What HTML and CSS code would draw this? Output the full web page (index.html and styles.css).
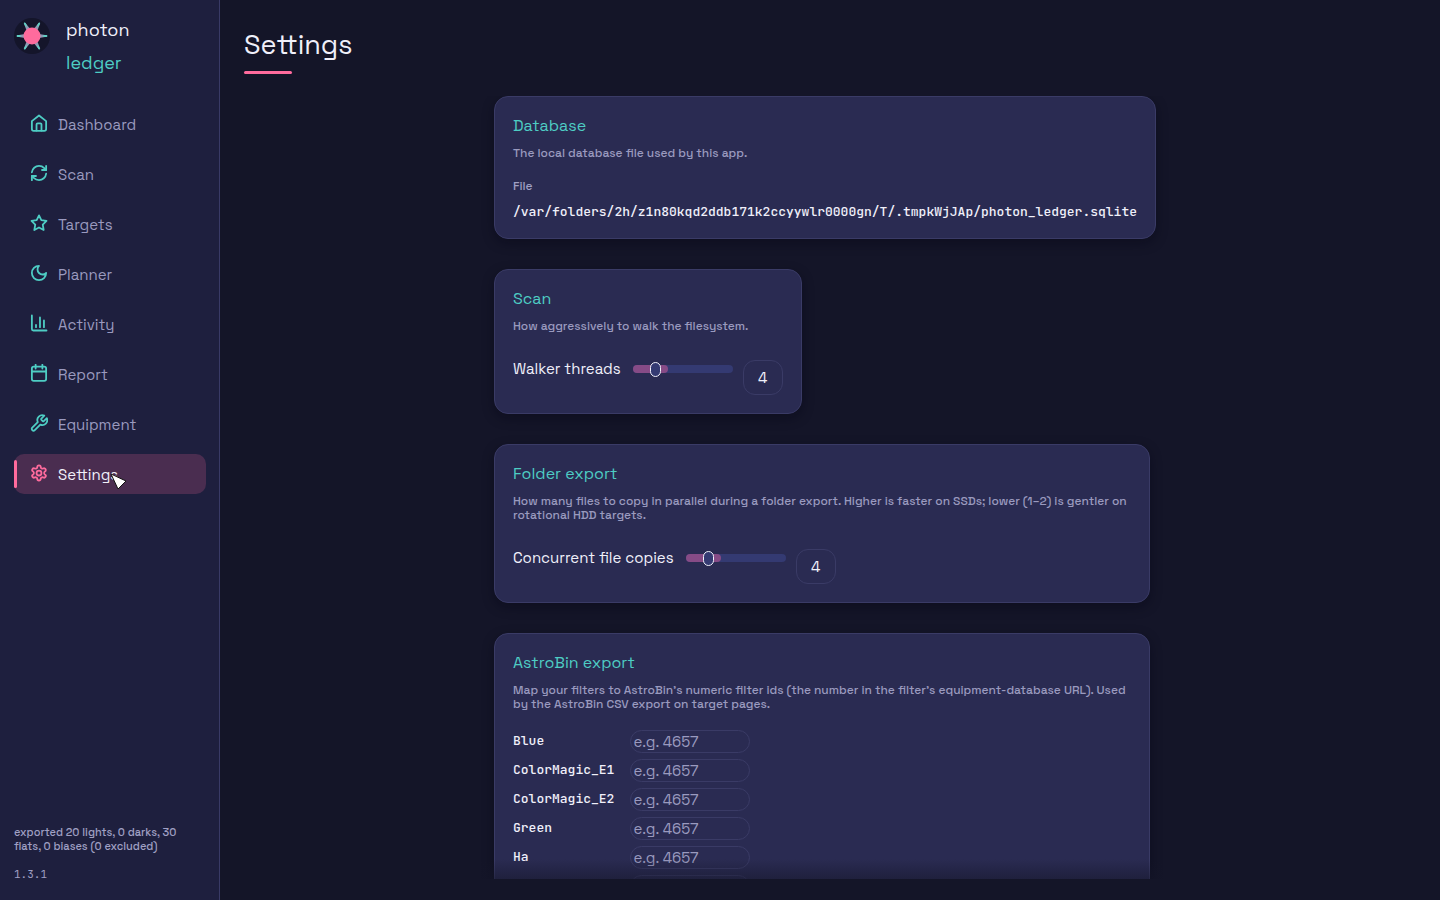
FILE: index.html
```
<!DOCTYPE html>
<html lang="en">
<head>
  <meta charset="UTF-8" />
  <meta name="viewport" content="width=device-width, initial-scale=1.0" />
  <title>Photon Ledger - Settings</title>
  <link rel="stylesheet" href="styles.css">
</head>
<body>
  <div class="app">
    <aside class="sidebar">
      <div class="brand">
        <svg class="brand-logo" viewBox="0 0 36 36" aria-hidden="true">
          <circle cx="18" cy="18" r="18" fill="#14152a" />
          <g fill="#8f9bb3">
            <path d="M17.200 3.500 H18.800 L20 11 H16 Z" transform="rotate(30 18 18)" />
            <path d="M17.200 3.500 H18.800 L20 11 H16 Z" transform="rotate(90 18 18)" />
            <path d="M17.200 3.500 H18.800 L20 11 H16 Z" transform="rotate(150 18 18)" />
            <path d="M17.200 3.500 H18.800 L20 11 H16 Z" transform="rotate(210 18 18)" />
            <path d="M17.200 3.500 H18.800 L20 11 H16 Z" transform="rotate(270 18 18)" />
            <path d="M17.200 3.500 H18.800 L20 11 H16 Z" transform="rotate(330 18 18)" />
          </g>
          <path d="M3.500 18 H6 M32.500 18 H30 M10.750 5.400 L12 7.600 M25.250 5.400 L24 7.600 M10.750 30.600 L12 28.400 M25.250 30.600 L24 28.400" stroke="#5fcfc4" stroke-width="1.800" stroke-linecap="round" />
          <circle cx="18" cy="18" r="8.500" fill="#ff6b9d" />
        </svg>
        <div class="brand-text">
          <span>photon</span>
          <span class="brand-accent">ledger</span>
        </div>
      </div>

      <nav class="nav">
        <a href="#" class="nav-item">
          <svg class="icon" viewBox="0 0 24 24"><path d="M12 2 L21.500 9.500 V20 a2.500 2.500 0 0 1 -2.500 2.500 H5 A2.500 2.500 0 0 1 2.500 20 V9.500 Z" /><path d="M8.700 22 V14 a1.500 1.500 0 0 1 1.500 -1.500 H13.800 a1.500 1.500 0 0 1 1.500 1.500 V22" /></svg>
          <span>Dashboard</span>
        </a>
        <a href="#" class="nav-item">
          <svg class="icon" viewBox="0 0 24 24"><path d="M2.500 11 A9.600 9.600 0 0 1 12 2.500 a10 10 0 0 1 7 2.900 L21.500 8" /><path d="M21.500 2.500 V8 H16" /><path d="M21.500 13 A9.600 9.600 0 0 1 12 21.500 a10 10 0 0 1 -7 -2.900 L2.500 16" /><path d="M8 16 H2.500 V21.500" /></svg>
          <span>Scan</span>
        </a>
        <a href="#" class="nav-item">
          <svg class="icon" viewBox="0 0 24 24"><path d="M12 1.800 L15.100 8.200 L22 9.200 L17 14.200 L18.200 21.300 L12 18 L5.800 21.300 L7 14.200 L2 9.200 L8.900 8.200 Z" /></svg>
          <span>Targets</span>
        </a>
        <a href="#" class="nav-item">
          <svg class="icon" viewBox="0 0 24 24"><path d="M12 2.500 a6.300 6.300 0 0 0 9.500 9.500 A9.500 9.500 0 1 1 12 2.500 Z" /></svg>
          <span>Planner</span>
        </a>
        <a href="#" class="nav-item">
          <svg class="icon" viewBox="0 0 24 24"><path d="M2.500 2 V20 a2 2 0 0 0 2 2 H22" /><path d="M8 17.500 V14.500 M13.300 17.500 V4.500 M18.600 17.500 V8.500" /></svg>
          <span>Activity</span>
        </a>
        <a href="#" class="nav-item">
          <svg class="icon" viewBox="0 0 24 24"><rect x="2.500" y="3.500" width="19" height="19" rx="2.500" /><path d="M7.500 1 V6 M16.500 1 V6 M2.500 10 H21.500" /></svg>
          <span>Report</span>
        </a>
        <a href="#" class="nav-item">
          <svg class="icon" viewBox="0 0 24 24"><path d="M15.200 6.300 a1.100 1.100 0 0 0 0 1.500 l1.700 1.700 a1.100 1.100 0 0 0 1.500 0 l4 -4 a6.500 6.500 0 0 1 -8.600 8.600 l-7.400 7.400 a2.300 2.300 0 0 1 -3.400 -3.400 l7.400 -7.400 a6.500 6.500 0 0 1 8.600 -8.600 Z" /></svg>
          <span>Equipment</span>
        </a>
        <a href="#" class="nav-item active">
          <svg class="icon" viewBox="0 0 24 24"><path d="M9.700 4.100 a2.300 2.300 0 0 1 4.600 0 a2.300 2.300 0 0 0 3.300 1.900 a2.300 2.300 0 0 1 2.300 4 a2.300 2.300 0 0 0 0 3.900 a2.300 2.300 0 0 1 -2.300 4 a2.300 2.300 0 0 0 -3.300 1.900 a2.300 2.300 0 0 1 -4.600 0 a2.300 2.300 0 0 0 -3.300 -1.900 a2.300 2.300 0 0 1 -2.300 -4 a2.300 2.300 0 0 0 0 -3.900 a2.300 2.300 0 0 1 2.300 -4 a2.300 2.300 0 0 0 3.300 -1.900" /><circle cx="12" cy="12" r="3.300" /></svg>
          <span>Settings</span>
          <svg class="cursor" viewBox="0 0 18 18" aria-hidden="true"><path d="M1 1 L16 8 L8 16 Z" /></svg>
        </a>
      </nav>

      <div class="sidebar-footer">
        <p class="status">exported 20 lights, 0 darks, 30 flats, 0 biases (0 excluded)</p>
        <p class="version">1.3.1</p>
      </div>
    </aside>

    <main class="main">
      <h1 class="page-title">Settings</h1>

      <div class="scroll-area">
        <div class="cards">
          <section class="card card-file">
            <h2>Database</h2>
            <p class="hint">The local database file used by this app.</p>
            <div class="field-label">File</div>
            <code class="path">/var/folders/2h/z1n80kqd2ddb171k2ccyywlr0000gn/T/.tmpkWjJAp/photon_ledger.sqlite</code>
          </section>

          <section class="card">
            <h2>Scan</h2>
            <p class="hint">How aggressively to walk the filesystem.</p>
            <div class="slider-row">
              <label for="threads">Walker threads</label>
              <div class="slider"><input type="range" id="threads" min="1" max="16" value="4"></div>
              <output for="threads">4</output>
            </div>
          </section>

          <section class="card">
            <h2>Folder export</h2>
            <p class="hint">How many files to copy in parallel during a folder export. Higher is faster on SSDs; lower (1–2) is gentler on rotational HDD targets.</p>
            <div class="slider-row">
              <label for="copies">Concurrent file copies</label>
              <div class="slider"><input type="range" id="copies" min="1" max="16" value="4"></div>
              <output for="copies">4</output>
            </div>
          </section>

          <section class="card">
            <h2>AstroBin export</h2>
            <p class="hint">Map your filters to AstroBin’s numeric filter ids (the number in the filter’s equipment-database URL). Used by the AstroBin CSV export on target pages.</p>
            <div class="filters">
              <label for="f-blue">Blue</label>
              <input type="text" id="f-blue" placeholder="e.g. 4657">
              <label for="f-cm1">ColorMagic_E1</label>
              <input type="text" id="f-cm1" placeholder="e.g. 4657">
              <label for="f-cm2">ColorMagic_E2</label>
              <input type="text" id="f-cm2" placeholder="e.g. 4657">
              <label for="f-green">Green</label>
              <input type="text" id="f-green" placeholder="e.g. 4657">
              <label for="f-ha">Ha</label>
              <input type="text" id="f-ha" placeholder="e.g. 4657">
              <label for="f-next"></label>
              <input type="text" id="f-next">
            </div>
          </section>
        </div>
      </div>
    </main>
  </div>
</body>
</html>
```
FILE: styles.css
```
* {
  box-sizing: border-box;
}
body {
  margin: 0;
  font-family: 'Space Grotesk', Inter, sans-serif;
  font-size: 15px;
  color: #f0f0fa;
  background: #141528;
}
h1, h2, p {
  margin: 0;
  font-weight: 400;
}
.app {
  display: flex;
  height: 100vh;
  overflow: hidden;
}

/* Sidebar */
.sidebar {
  display: flex;
  flex-direction: column;
  flex: none;
  width: 220px;
  padding: 14px 13px 19px 14px;
  background: #1e1f3e;
  border-right: 1px solid #393a66;
}
.brand {
  display: flex;
  gap: 16px;
  margin-bottom: 25px;
}
.brand-logo {
  width: 36px;
  height: 36px;
  margin-top: 4px;
}
.brand-text {
  display: flex;
  flex-direction: column;
  gap: 1px;
  font-size: 18px;
  line-height: 32px;
}
.brand-accent {
  color: #4ecdc4;
}
.nav {
  display: flex;
  flex-direction: column;
  gap: 10px;
}
.nav-item {
  position: relative;
  display: flex;
  align-items: center;
  gap: 10px;
  height: 40px;
  padding: 0 16px;
  border-radius: 10px;
  color: #9a9abf;
  text-decoration: none;
}
.icon {
  width: 18px;
  height: 18px;
  margin-bottom: 3px;
  fill: none;
  stroke: #4ecdc4;
  stroke-width: 2.4;
  stroke-linecap: round;
  stroke-linejoin: round;
}
.nav-item.active {
  color: #f0f0fa;
  background: #4a2d50;
}
.nav-item.active .icon {
  stroke: #ff6b9d;
}
.nav-item.active::before {
  content: "";
  position: absolute;
  left: 0;
  top: 6px;
  bottom: 6px;
  width: 3px;
  border-radius: 2px;
  background: #ff6b9d;
}
.cursor {
  position: absolute;
  left: 96px;
  top: 19px;
  width: 18px;
  height: 18px;
  fill: #fff;
  stroke: #111;
  stroke-width: 1;
}
.sidebar-footer {
  margin-top: auto;
  font-size: 11px;
  line-height: 14px;
  color: #a0a0c4;
}
.status {
  padding-right: 16px;
  font-weight: 500;
}
.version {
  margin-top: 14px;
  font-family: 'JetBrains Mono', 'DejaVu Sans Mono', monospace;
}

/* Main */
.main {
  display: flex;
  flex-direction: column;
  flex: 1;
  min-width: 0;
  padding: 28px 24px 21px;
}
.page-title {
  position: relative;
  margin-bottom: 22px;
  padding-bottom: 12px;
  font-size: 27px;
  line-height: 34px;
}
.page-title::after {
  content: "";
  position: absolute;
  left: 0;
  bottom: 0;
  width: 48px;
  height: 3px;
  border-radius: 2px;
  background: #ff6b9d;
}
.scroll-area {
  position: relative;
  flex: 1;
  min-height: 0;
  padding-right: 10px;
  overflow: hidden;
}
.scroll-area::after {
  content: "";
  position: absolute;
  left: 0;
  right: 0;
  bottom: 0;
  height: 20px;
  background: linear-gradient(transparent, rgba(20, 21, 40, 0.5));
}
.cards {
  display: flex;
  flex-direction: column;
  align-items: flex-start;
  gap: 30px;
  width: fit-content;
  margin: 0 auto;
}
.card {
  max-width: 656px;
  padding: 18px;
  background: #2a2b52;
  border: 1px solid #3a3b66;
  border-radius: 14px;
  box-shadow: 0 4px 12px rgba(5, 6, 20, 0.4);
}
.card-file {
  max-width: none;
}
.card h2 {
  margin-bottom: 9px;
  font-size: 16px;
  line-height: 22px;
  color: #4ecdc4;
}
.hint {
  margin-bottom: 18px;
  font-size: 12px;
  font-weight: 500;
  line-height: 14px;
  color: #9a9abf;
}
.field-label {
  margin-bottom: 8px;
  font-size: 12px;
  font-weight: 500;
  line-height: 17px;
  color: #a0a0c4;
}
.path {
  display: block;
  font-family: 'JetBrains Mono', 'DejaVu Sans Mono', monospace;
  font-size: 13px;
  font-weight: 500;
  line-height: 17px;
}

.slider-row {
  display: flex;
  align-items: flex-start;
  line-height: 36px;
}
.slider {
  position: relative;
  display: flex;
  align-items: center;
  width: 100px;
  height: 8px;
  margin: 14px 10px 0 12px;
  border-radius: 4px;
  background: #343a72;
}
.slider::before {
  content: "";
  position: absolute;
  left: 0;
  width: 35px;
  height: 8px;
  border-radius: 4px;
  background: #864b86;
}
.slider input {
  position: relative;
  appearance: none;
  width: 100%;
  margin: 0;
  background: transparent;
}
.slider input::-webkit-slider-thumb {
  appearance: none;
  width: 11px;
  height: 15px;
  border: 1px solid #f0f0fa;
  border-radius: 6px;
  background: #343a72;
}
output {
  width: 40px;
  height: 35px;
  margin-top: 9px;
  border: 1px solid #3a3b66;
  border-radius: 12px;
  line-height: 34px;
  text-align: center;
}

.filters {
  display: grid;
  grid-template-columns: max-content 120px;
  gap: 6px 16px;
  padding-top: 1px;
}
.filters label {
  font-family: 'JetBrains Mono', 'DejaVu Sans Mono', monospace;
  font-size: 13px;
  font-weight: 500;
  line-height: 22px;
}
.filters input {
  width: 100%;
  height: 23px;
  padding: 0 2px;
  border: 1px solid #3a3b66;
  border-radius: 12px;
  background: transparent;
  color: #f0f0fa;
  font-family: inherit;
  font-size: 15px;
}
.filters input::placeholder {
  color: #9a9abf;
}
```
